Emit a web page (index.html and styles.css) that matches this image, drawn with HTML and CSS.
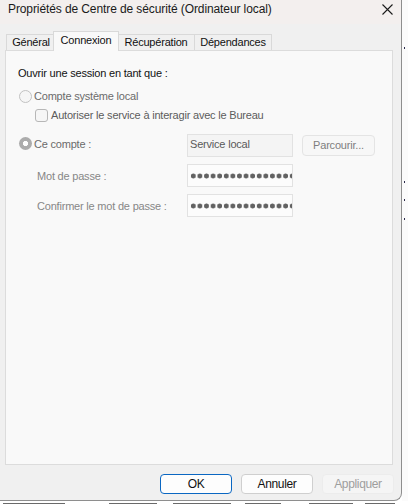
FILE: index.html
```html
<!DOCTYPE html>
<html lang="fr">
<head>
<meta charset="utf-8">
<title>Propriétés de Centre de sécurité</title>
<link rel="stylesheet" href="styles.css">
</head>
<body>
<div class="desktop">
  <div class="row">
    <div class="window">
      <div class="titlebar">
        <span class="title">Propriétés de Centre de sécurité (Ordinateur local)</span>
        <svg class="close" width="11" height="11" viewBox="0 0 11 11"><path d="M0.5 0.5L10.5 10.5M10.5 0.5L0.5 10.5" stroke="#1b1b1b" stroke-width="1.1" fill="none"/></svg>
      </div>
      <div class="content">
        <div class="tabs">
          <div class="tab t-general">Général</div>
          <div class="tab t-connexion active">Connexion</div>
          <div class="tab t-recup">Récupération</div>
          <div class="tab t-dep">Dépendances</div>
        </div>
        <div class="panel">
          <div class="heading">Ouvrir une session en tant que :</div>
          <div class="option">
            <span class="radio"></span>
            <span class="opt-text">Compte système local</span>
          </div>
          <div class="option sub">
            <span class="check"></span>
            <span class="opt-text dark">Autoriser le service à interagir avec le Bureau</span>
          </div>
          <div class="account">
            <div class="acc-row first">
              <div class="acc-label top">
                <span class="radio checked"></span>
                <span class="opt-text">Ce compte :</span>
              </div>
              <div class="field">Service local</div>
              <div class="browse">Parcourir...</div>
            </div>
            <div class="acc-row">
              <div class="acc-label label">Mot de passe :</div>
              <div class="field pw"><span class="dots"></span></div>
            </div>
            <div class="acc-row">
              <div class="acc-label label">Confirmer le mot de passe :</div>
              <div class="field pw"><span class="dots"></span></div>
            </div>
          </div>
        </div>
        <div class="actions">
          <div class="btn default">OK</div>
          <div class="btn">Annuler</div>
          <div class="btn disabled">Appliquer</div>
        </div>
      </div>
    </div>
    <div class="edge">
      <span class="mark m1"></span>
      <span class="mark m2"></span>
      <span class="mark m3"></span>
      <span class="mark m4"></span>
    </div>
  </div>
  <div class="below">
    <span class="frag f1"></span>
    <span class="frag f2"></span>
    <span class="frag f3"></span>
    <span class="frag f4"></span>
    <span class="frag f5"></span>
    <span class="frag f6"></span>
  </div>
</div>
</body>
</html>
```

FILE: styles.css
```css
* { box-sizing: border-box; }

html, body {
  margin: 0;
  padding: 0;
  background: #ffffff;
}

body {
  font-family: "Liberation Sans", Arial, sans-serif;
  font-size: 11px;
  letter-spacing: -0.2px;
  color: #000;
  width: 408px;
  height: 504px;
  overflow: hidden;
}

.desktop {
  display: flex;
  flex-direction: column;
}

.row {
  display: flex;
}

.window {
  width: 402px;
  flex: none;
  height: 501px;
  background: #f0f0f0;
  border-right: 1px solid #8e8e8e;
  border-bottom: 1px solid #8e8e8e;
  border-bottom-right-radius: 8px;
  display: flex;
  flex-direction: column;
  overflow: hidden;
}

.titlebar {
  height: 24px;
  flex: none;
  background: #f3efee;
  display: flex;
  justify-content: space-between;
  align-items: flex-start;
  padding: 1px 8px 0 8px;
}

.title {
  font-size: 12px;
  line-height: 16px;
  letter-spacing: -0.1px;
  color: #1a1a1a;
}

.close {
  margin-top: 3px;
}

.content {
  flex: 1;
  display: flex;
  flex-direction: column;
  align-items: flex-start;
  padding: 7px 7px 6px 5px;
}

.tabs {
  display: flex;
  align-items: flex-end;
  height: 20px;
  margin-bottom: -1px;
  padding-left: 1px;
  flex: none;
}

.tab {
  height: 17px;
  border: 1px solid #d9d9d9;
  border-bottom: none;
  background: #f0f0f0;
  text-align: center;
  line-height: 15px;
  color: #111;
}

.tab + .tab { margin-left: -1px; }

.t-general { width: 50px; }
.t-recup { width: 78px; }
.t-dep { width: 78px; }

.tab.active {
  height: 20px;
  width: 66px;
  margin-left: -3px;
  margin-right: -2px;
  background: #f9f9f9;
  line-height: 16px;
  position: relative;
  z-index: 1;
}

.tab.active + .tab { margin-left: 0; }

.panel {
  flex: 1;
  width: 388px;
  background: #f9f9f9;
  border: 1px solid #dcdcdc;
  padding: 14px 12px 0 12px;
}

.heading {
  line-height: 16px;
  color: #111;
}

.option {
  display: flex;
  align-items: center;
  height: 16px;
  margin-top: 7px;
  margin-left: 1px;
}

.option.sub {
  margin-top: 3px;
  margin-left: 17px;
}

.radio {
  width: 13px;
  height: 13px;
  border-radius: 50%;
  border: 1px solid #c2c2c2;
  background: #f6f6f6;
  flex: none;
  margin-right: 2px;
}

.radio.checked {
  border: none;
  background: radial-gradient(circle, #fdfdfd 0 2.3px, #acacac 2.9px);
}

.check {
  width: 13px;
  height: 13px;
  border-radius: 3px;
  border: 1px solid #b7b7b7;
  background: #f6f6f6;
  flex: none;
  margin-right: 3px;
}

.opt-text {
  color: #6b6b6b;
}

.opt-text.dark {
  color: #5c5c5c;
}

.account {
  display: flex;
  flex-direction: column;
  gap: 7px;
  margin-top: 11px;
  margin-left: 1px;
}

.acc-row {
  display: flex;
  align-items: center;
  height: 23px;
}

.acc-label {
  width: 168px;
  flex: none;
  display: flex;
  align-items: center;
}

.acc-label.top {
  align-self: flex-start;
  margin-top: 3px;
}

.label {
  padding-left: 18px;
  color: #878787;
}

.field {
  width: 106px;
  flex: none;
  height: 23px;
  border: 1px solid #e2e2e2;
  background: #f4f4f4;
  color: #5a5a5a;
  padding: 2px 0 0 2px;
  line-height: 15px;
  overflow: hidden;
}

.field.pw {
  background: #fcfcfc;
  padding: 0 0 0 2px;
  display: flex;
  align-items: center;
}

.dots {
  display: block;
  width: 102px;
  height: 6px;
  background: radial-gradient(circle, #626262 0 2.2px, transparent 2.8px) 0 0 / 6.6px 6px repeat-x;
}

.browse {
  width: 73px;
  flex: none;
  margin-left: 9px;
  height: 21px;
  border: 1px solid #e4e4e4;
  border-radius: 4px;
  background: #f7f7f7;
  color: #7e7e7e;
  text-align: center;
  line-height: 19px;
}

.actions {
  flex: none;
  align-self: stretch;
  display: flex;
  justify-content: flex-end;
  gap: 9px;
  margin-top: 9px;
}

.btn {
  width: 72px;
  height: 20px;
  border: 1px solid #cfcfcf;
  border-radius: 4px;
  background: #fdfdfd;
  text-align: center;
  line-height: 18px;
  font-size: 12px;
  letter-spacing: -0.35px;
  color: #111;
}

.btn.default {
  border-color: #0a67c2;
}

.btn.disabled {
  background: #f5f5f5;
  border-color: #ececec;
  color: #9e9e9e;
}

.edge {
  flex: 1;
  height: 501px;
  background: #fbfbfb;
  display: flex;
  flex-direction: column;
  align-items: flex-start;
  padding-left: 2px;
}

.mark {
  width: 1px;
  height: 2px;
  background: #2a2a4a;
}

.m1 { margin-top: 47px; }
.m2 { margin-top: 132px; }
.m3 { margin-top: 16px; }
.m4 { margin-top: 17px; }

.below {
  height: 3px;
  display: flex;
  align-items: flex-end;
  padding-left: 3px;
  background: #fff;
}

.frag {
  height: 1px;
  background: #6a6a6a;
}

.f1 { width: 62px; }
.f2 { width: 48px; margin-left: 44px; }
.f3 { width: 58px; margin-left: 16px; }
.f4 { width: 36px; margin-left: 14px; }
.f5 { width: 44px; margin-left: 28px; }
.f6 { width: 30px; margin-left: 12px; }
```
